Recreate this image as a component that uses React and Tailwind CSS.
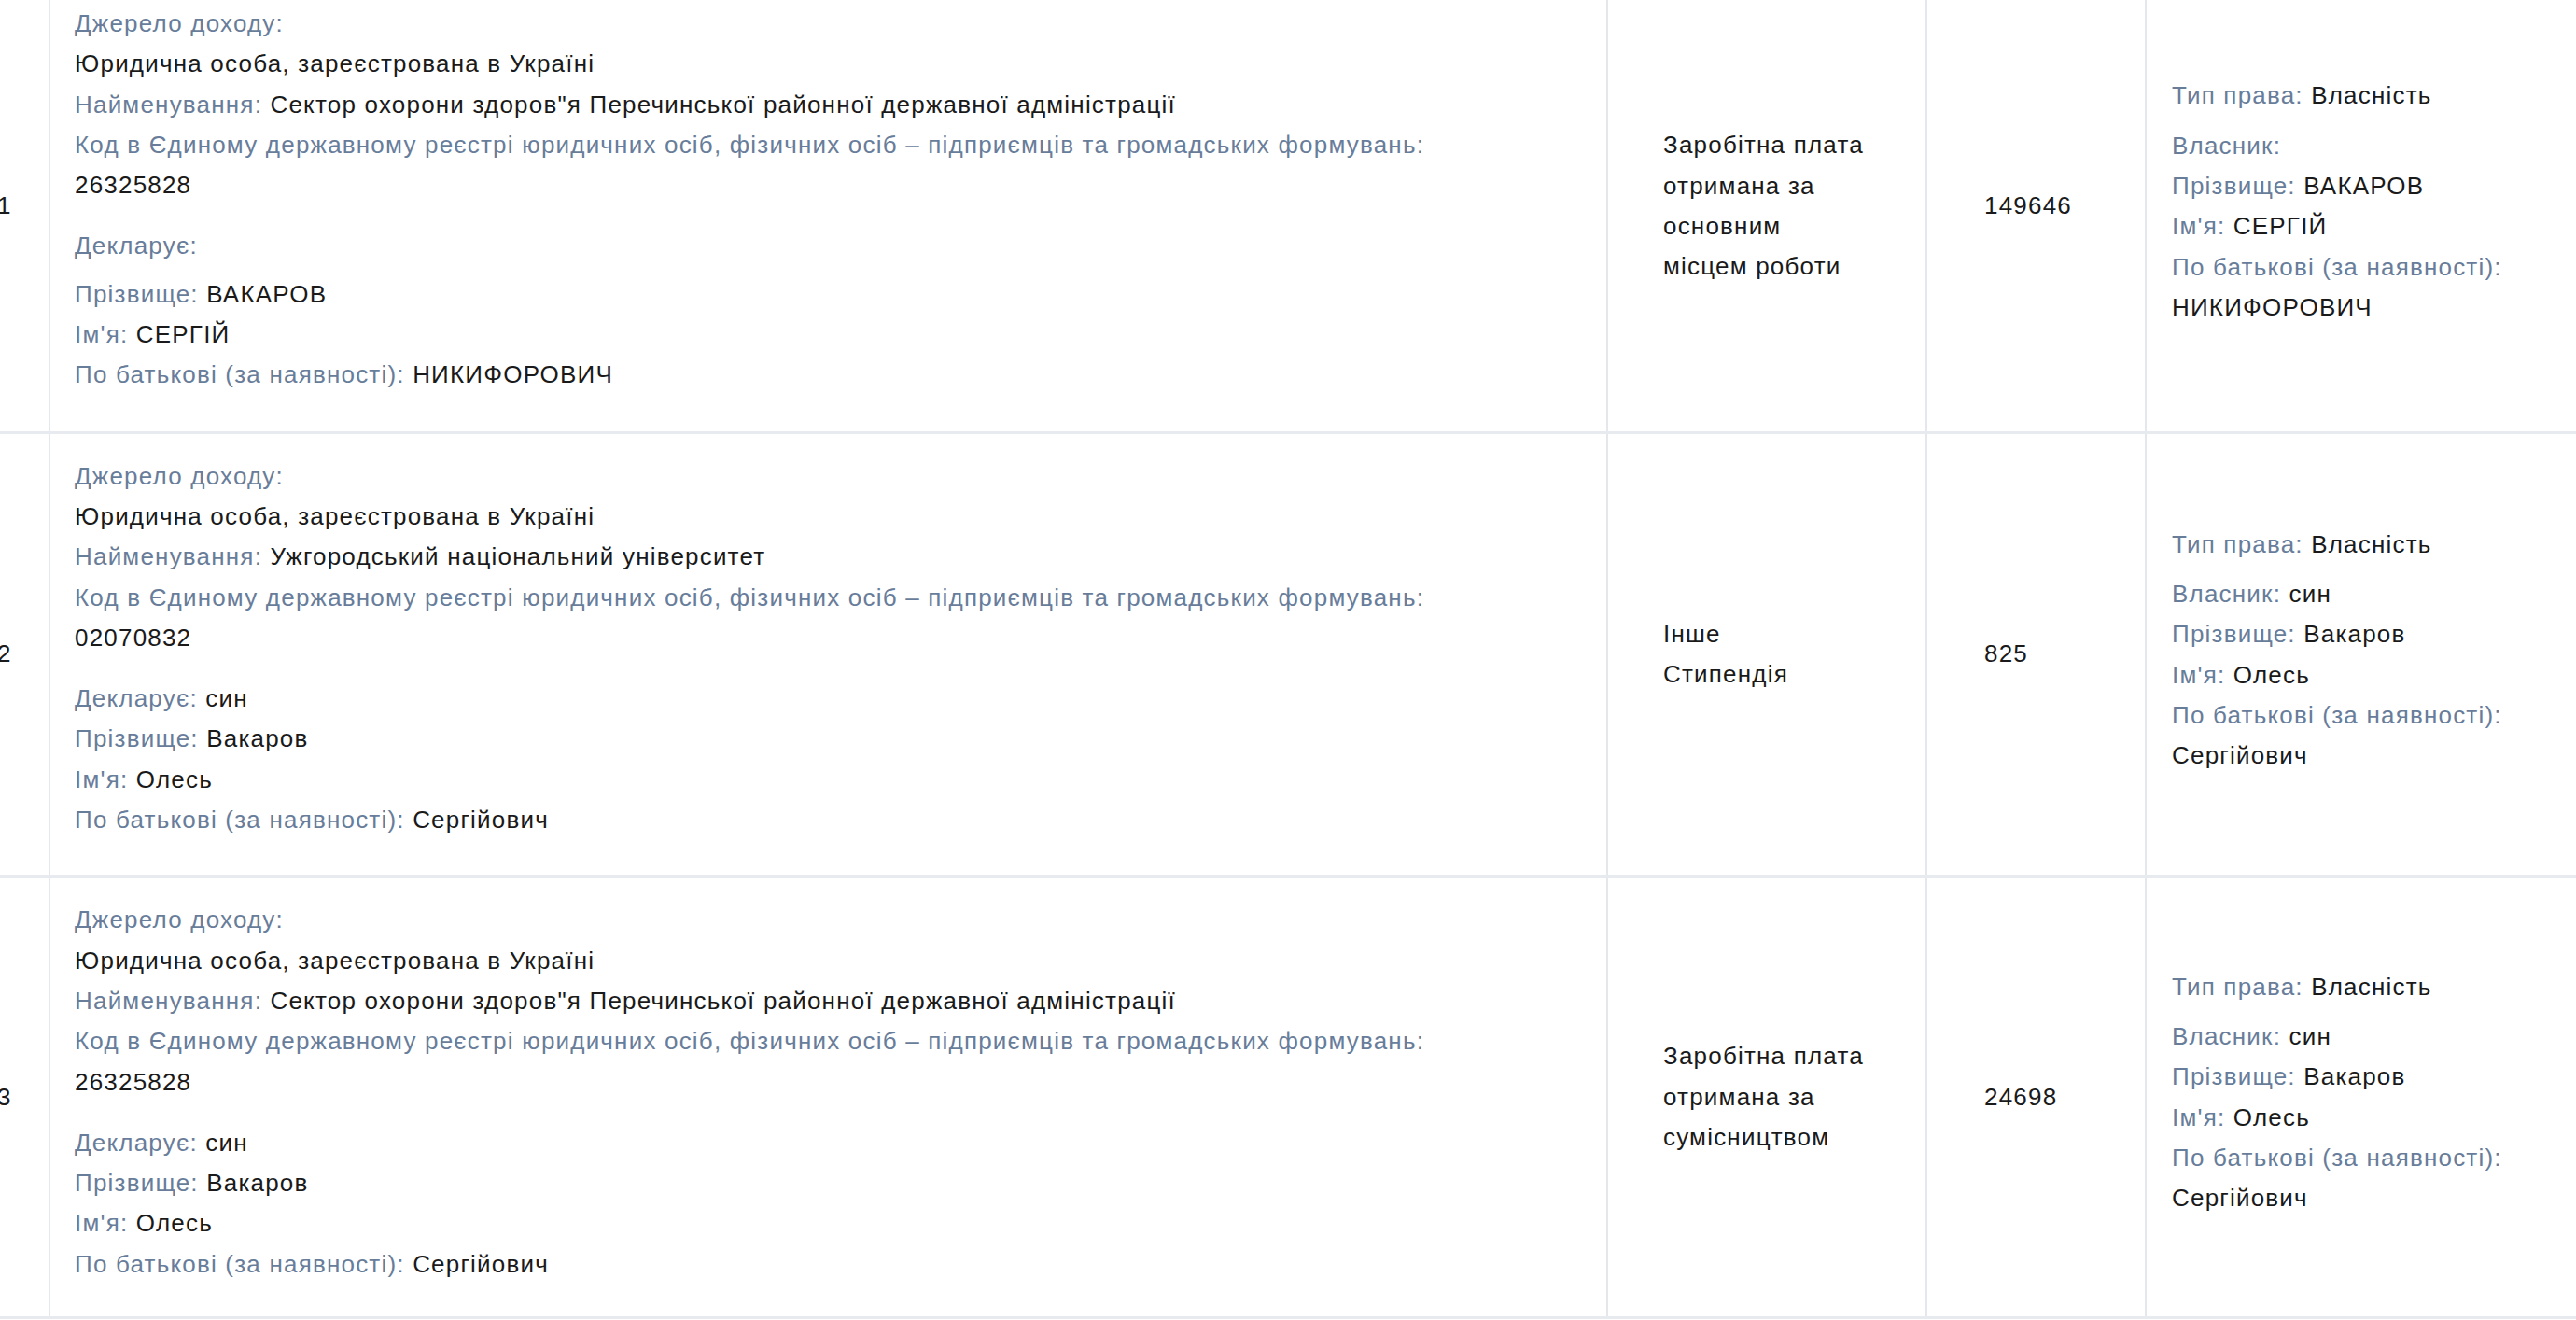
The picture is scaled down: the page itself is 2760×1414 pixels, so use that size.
const rows = [
  {
    n: '1',
    name: 'Сектор охорони здоров"я Перечинської районної державної адміністрації',
    code: '26325828',
    declarer: '',
    last: 'ВАКАРОВ',
    first: 'СЕРГІЙ',
    middle: 'НИКИФОРОВИЧ',
    kind: ['Заробітна плата', 'отримана за', 'основним', 'місцем роботи'],
    amount: '149646',
    owner: '',
  },
  {
    n: '2',
    name: 'Ужгородський національний університет',
    code: '02070832',
    declarer: 'син',
    last: 'Вакаров',
    first: 'Олесь',
    middle: 'Сергійович',
    kind: ['Інше', 'Стипендія'],
    amount: '825',
    owner: 'син',
  },
  {
    n: '3',
    name: 'Сектор охорони здоров"я Перечинської районної державної адміністрації',
    code: '26325828',
    declarer: 'син',
    last: 'Вакаров',
    first: 'Олесь',
    middle: 'Сергійович',
    kind: ['Заробітна плата', 'отримана за', 'сумісництвом'],
    amount: '24698',
    owner: 'син',
  },
];

const Label = ({ children }) => <span className="text-[#687d9a]">{children}</span>;

const Field = ({ label, value, className = '' }) => (
  <div className={className}>
    <Label>{label}</Label>
    {value ? ' ' + value : null}
  </div>
);

const padBottom = (i) => (i === 0 ? 'pb-[38px]' : i === rows.length - 1 ? 'pb-[34px]' : 'pb-[37px]');

const IncomeRow = ({ row, index }) => (
  <div className="grid grid-cols-[83px_1669px_342px_235px_1fr] border-b-[3px] border-[#e7eaee]">
    <div className="flex items-center border-r-2 border-[#e4e7eb] pl-[26px]">{row.n}</div>

    <div className={'border-r-2 border-[#e4e7eb] pl-[26px] pt-[24px] ' + padBottom(index)}>
      <div className="mb-[22px]">
        <div>
          <Label>Джерело доходу:</Label>
        </div>
        <div>Юридична особа, зареєстрована в Україні</div>
        <Field label="Найменування:" value={row.name} />
        <div>
          <Label>Код в Єдиному державному реєстрі юридичних осіб, фізичних осіб – підприємців та громадських формувань:</Label>
        </div>
        <div>{row.code}</div>
      </div>
      <div>
        <Field label="Декларує:" value={row.declarer} className={row.declarer ? '' : 'mb-[8px]'} />
        <Field label="Прізвище:" value={row.last} />
        <Field label="Ім'я:" value={row.first} />
        <Field label="По батькові (за наявності):" value={row.middle} />
      </div>
    </div>

    <div className="flex items-center border-r-2 border-[#e4e7eb] pl-[59px]">
      <div>
        {row.kind.map((line) => (
          <div key={line}>{line}</div>
        ))}
      </div>
    </div>

    <div className="flex items-center border-r-2 border-[#e4e7eb] pl-[61px]">{row.amount}</div>

    <div className="flex items-center pl-[27px] pr-[20px]">
      <div className="pb-[9px]">
        <Field label="Тип права:" value="Власність" className="mb-[10px]" />
        <Field label="Власник:" value={row.owner} />
        <Field label="Прізвище:" value={row.last} />
        <Field label="Ім'я:" value={row.first} />
        <div>
          <Label>По батькові (за наявності):</Label>
        </div>
        <div>{row.middle}</div>
      </div>
    </div>
  </div>
);

export default function App() {
  return (
    <div className="h-[1414px] overflow-hidden bg-white font-['Liberation_Sans',Arial,sans-serif] text-[26px] leading-[43.3px] tracking-[1.2px] text-[#1a1a1a]">
      <div className="-ml-[29px] -mt-[20px]">
        {rows.map((row, i) => (
          <IncomeRow key={row.n} row={row} index={i} />
        ))}
      </div>
    </div>
  );
}
